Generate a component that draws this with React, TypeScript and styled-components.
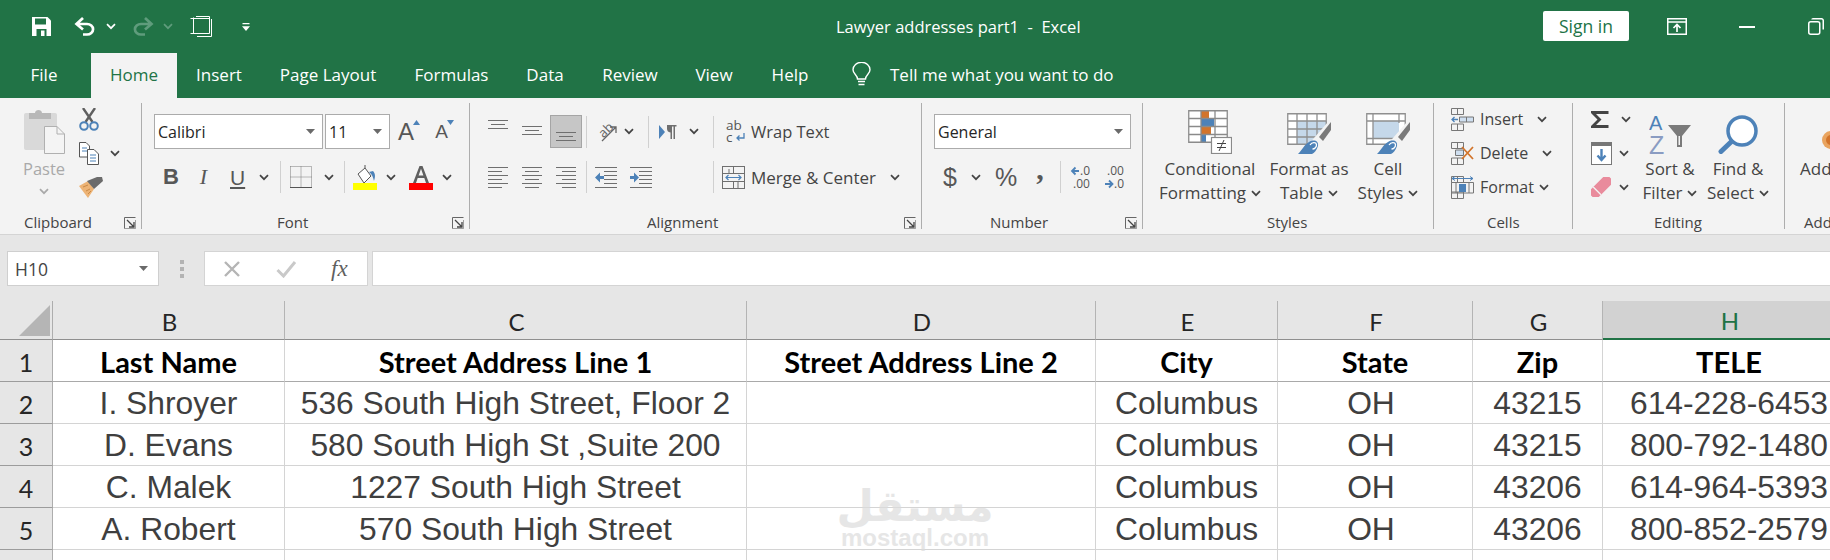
import React from 'react';
import styled, { createGlobalStyle } from 'styled-components';

const GREEN = '#217346';
const INK = '#444444';
const BLUE = '#4d82b8';

const GlobalStyle = createGlobalStyle`
	html, body {
		margin: 0;
		padding: 0;
		background: #e6e6e6;
		overflow: hidden;
	}
	svg {
		display: block;
		flex: none;
	}
`;

const Page = styled.div`
	width: 1830px;
	height: 560px;
	overflow: hidden;
	background: #e6e6e6;
	font-family: 'Open Sans', 'Noto Sans', sans-serif;
	color: ${INK};
`;

/* title bar */
const TitleBar = styled.div`
	height: 53px;
	background: ${GREEN};
	display: flex;
	align-items: center;
`;
const QuickBar = styled.div`
	flex: 0 0 836px;
	display: flex;
	align-items: center;
	padding-left: 32px;
	box-sizing: border-box;
`;
const DocTitle = styled.div`
	flex: 0 0 707px;
	color: #fff;
	font-size: 16.5px;
	white-space: pre;
`;
const SignIn = styled.div`
	width: 86px;
	height: 30px;
	margin-top: -1px;
	background: #fff;
	border-radius: 2px;
	color: ${GREEN};
	font-size: 17.5px;
	display: flex;
	align-items: center;
	justify-content: center;
`;

/* tabs */
const TabBar = styled.div`
	height: 45px;
	background: ${GREEN};
	display: flex;
	align-items: stretch;
`;
const Tab = styled.div<{ $w: number; $active?: boolean; $ml?: number }>`
	width: ${(p) => p.$w}px;
	margin-left: ${(p) => p.$ml || 0}px;
	padding-bottom: 3px;
	box-sizing: border-box;
	display: flex;
	align-items: center;
	justify-content: center;
	font-size: 17px;
	color: ${(p) => (p.$active ? GREEN : '#fff')};
	background: ${(p) => (p.$active ? '#f3f3f3' : 'transparent')};
`;
const TellMe = styled.div`
	display: flex;
	align-items: center;
	gap: 19px;
	margin-left: 22px;
	padding-bottom: 3px;
	color: #fff;
	font-size: 17px;
`;

/* ribbon */
const Ribbon = styled.div`
	height: 137px;
	box-sizing: border-box;
	background: #f3f3f3;
	border-bottom: 1px solid #d4d4d4;
	padding-top: 5px;
	display: flex;
	overflow: hidden;
`;
const Group = styled.div<{ $w: number; $last?: boolean }>`
	flex: 0 0 ${(p) => p.$w}px;
	height: 126px;
	box-sizing: border-box;
	border-right: ${(p) => (p.$last ? 'none' : '1px solid #adadad')};
	display: flex;
	flex-direction: column;
`;
const GroupBody = styled.div<{ $pl?: number; $pt?: number; $row?: boolean }>`
	height: 112px;
	flex: none;
	box-sizing: border-box;
	padding-left: ${(p) => p.$pl || 0}px;
	padding-top: ${(p) => p.$pt || 0}px;
	display: flex;
	flex-direction: ${(p) => (p.$row ? 'row' : 'column')};
`;
const GroupFoot = styled.div<{ $x: number }>`
	height: 15px;
	padding-left: ${(p) => p.$x}px;
	display: flex;
	align-items: center;
	font-size: 15px;
	line-height: 15px;
	white-space: nowrap;
	& > svg {
		margin-left: auto;
		margin-right: 5px;
	}
`;
const ToolRow = styled.div<{ $mt?: number; $h: number }>`
	display: flex;
	align-items: center;
	height: ${(p) => p.$h}px;
	margin-top: ${(p) => p.$mt || 0}px;
	white-space: nowrap;
`;
const Tool = styled.div<{ $w?: number; $ml?: number }>`
	flex: none;
	display: flex;
	align-items: center;
	justify-content: center;
	${(p) => (p.$w ? `width: ${p.$w}px;` : '')}
	margin-left: ${(p) => p.$ml || 0}px;
`;
const Divider = styled.div<{ $ml: number; $h?: number }>`
	flex: none;
	width: 1px;
	height: ${(p) => p.$h || 32}px;
	margin-left: ${(p) => p.$ml}px;
	background: #d0d0d0;
`;
const ComboBox = styled.div<{ $w: number; $ml?: number }>`
	flex: none;
	box-sizing: border-box;
	width: ${(p) => p.$w}px;
	height: 35px;
	margin-left: ${(p) => p.$ml || 0}px;
	background: #fff;
	border: 1px solid #ababab;
	display: flex;
	align-items: center;
	justify-content: space-between;
	padding: 0 7px 0 3px;
	color: #262626;
	font-size: 16px;
`;
const ToolText = styled.div<{ $size?: number; $ml?: number }>`
	font-size: ${(p) => p.$size || 16}px;
	margin-left: ${(p) => p.$ml || 0}px;
`;
const GlyphBtn = styled.div<{
	$w: number;
	$ml?: number;
	$font?: string;
	$size: number;
	$weight?: number;
	$italic?: boolean;
	$raise?: number;
}>`
	flex: none;
	width: ${(p) => p.$w}px;
	margin-left: ${(p) => p.$ml || 0}px;
	margin-bottom: ${(p) => p.$raise || 0}px;
	text-align: center;
	line-height: 1;
	font-family: ${(p) => p.$font || "'Liberation Sans', sans-serif"};
	font-size: ${(p) => p.$size}px;
	font-weight: ${(p) => p.$weight || 400};
	font-style: ${(p) => (p.$italic ? 'italic' : 'normal')};
	color: #575757;
`;
const GrowBadge = styled.div`
	flex: none;
	align-self: flex-start;
	margin: 6px 0 0 -1px;
`;
const PasteColumn = styled.div`
	flex: none;
	width: 42px;
	margin-left: 23px;
	padding-top: 6px;
	display: flex;
	flex-direction: column;
	align-items: center;
	color: #a9a9a9;
	font-size: 16.5px;
	line-height: 24px;
`;
const PasteLabel = styled.div`
	margin-top: 3px;
`;
const PasteChevron = styled.div`
	margin-top: 7px;
`;
const RowStack = styled.div<{ $ml?: number }>`
	flex: none;
	margin-left: ${(p) => p.$ml || 0}px;
	margin-top: -1px;
	display: flex;
	flex-direction: column;
`;
const StackRow = styled.div`
	height: 34px;
	display: flex;
	align-items: center;
	font-size: 16px;
	white-space: nowrap;
`;
const BigTool = styled.div<{ $w: number; $ml?: number; $start?: boolean }>`
	flex: none;
	width: ${(p) => p.$w}px;
	margin-left: ${(p) => p.$ml || 0}px;
	display: flex;
	flex-direction: column;
	align-items: ${(p) => (p.$start ? 'flex-start' : 'center')};
	font-size: 17px;
	line-height: 24px;
	white-space: nowrap;
`;
const BigIcon = styled.div`
	height: 54px;
	display: flex;
	align-items: flex-end;
	padding-bottom: 3px;
	box-sizing: border-box;
`;
const ChevronLine = styled.div`
	display: flex;
	align-items: center;
	gap: 5px;
`;

/* formula bar */
const FormulaZone = styled.div`
	height: 66px;
	box-sizing: border-box;
	padding: 16px 0 0 7px;
	display: flex;
	align-items: flex-start;
`;
const NameBox = styled.div`
	width: 152px;
	height: 35px;
	box-sizing: border-box;
	background: #fff;
	border: 1px solid #cfcfcf;
	display: flex;
	align-items: center;
	justify-content: space-between;
	padding: 0 10px 0 7px;
	font-size: 17.5px;
`;
const Grip = styled.div`
	width: 45px;
	height: 35px;
	display: flex;
	align-items: center;
	justify-content: center;
`;
const FxBox = styled.div`
	width: 164px;
	height: 35px;
	box-sizing: border-box;
	background: #fff;
	border: 1px solid #d4d4d4;
	display: flex;
	align-items: center;
	padding-left: 18px;
`;
const FxGlyph = styled.div`
	margin-left: 34px;
	font-family: 'Liberation Serif', serif;
	font-style: italic;
	font-size: 23px;
	color: #5f5f5f;
	line-height: 1;
`;
const FormulaInput = styled.div`
	flex: 1;
	height: 35px;
	box-sizing: border-box;
	margin-left: 4px;
	background: #fff;
	border: 1px solid #d4d4d4;
	border-right: none;
`;

/* sheet */
const Sheet = styled.div`
	position: relative;
	display: grid;
	grid-template-columns: 53px 232px 462px 349px 182px 195px 130px 253px;
	grid-template-rows: 39px repeat(5, 42px);
	width: 1856px;
	background: #fff;
`;
const Corner = styled.div`
	background: #e6e6e6;
	border-right: 1px solid #adadad;
	border-bottom: 1px solid #8f8f8f;
	box-sizing: border-box;
	display: flex;
	align-items: flex-end;
	justify-content: flex-end;
	padding: 0 2px 3px 0;
`;
const ColHead = styled.div<{ $selected?: boolean }>`
	box-sizing: border-box;
	display: flex;
	align-items: center;
	justify-content: center;
	padding: 2px 0 0 2px;
	background: ${(p) => (p.$selected ? '#d2d2d2' : '#e6e6e6')};
	border-right: 1px solid ${(p) => (p.$selected ? '#d2d2d2' : '#b4b4b4')};
	border-bottom: ${(p) => (p.$selected ? `2px solid ${GREEN}` : '1px solid #8f8f8f')};
	color: ${(p) => (p.$selected ? GREEN : '#262626')};
	font-family: 'Lato', sans-serif;
	font-size: 24px;
`;
const RowHead = styled.div`
	box-sizing: border-box;
	display: flex;
	align-items: center;
	justify-content: center;
	padding-top: 3px;
	background: #e6e6e6;
	border-right: 1px solid #adadad;
	border-bottom: 1px solid #9c9c9c;
	color: #262626;
	font-family: 'Lato', sans-serif;
	font-size: 25px;
`;
const Cell = styled.div<{ $head?: boolean; $shift?: number }>`
	box-sizing: border-box;
	display: flex;
	align-items: center;
	justify-content: center;
	white-space: nowrap;
	padding-top: 2px;
	padding-right: ${(p) => p.$shift || 0}px;
	border-right: 1px solid #d4d4d4;
	border-bottom: 1px solid ${(p) => (p.$head ? '#a9a9a9' : '#d4d4d4')};
	color: ${(p) => (p.$head ? '#000' : '#3f3f3f')};
	font-family: ${(p) => (p.$head ? "'Lato', sans-serif" : "'Liberation Sans', sans-serif")};
	font-weight: ${(p) => (p.$head ? 700 : 400)};
	font-size: ${(p) => (p.$head ? 29 : 31.8)}px;
`;
const FillerRow = styled.div`
	height: 20px;
	width: 1856px;
	display: grid;
	grid-template-columns: 53px 232px 462px 349px 182px 195px 130px 253px;
	background: #fff;
	& > div {
		border-right: 1px solid #d4d4d4;
	}
	& > div:first-child {
		background: #e6e6e6;
		border-right-color: #adadad;
	}
`;
const Watermark = styled.div`
	position: absolute;
	left: 842px;
	top: 184px;
	width: 146px;
	display: flex;
	flex-direction: column;
	align-items: center;
	color: #dcdcdc;
	opacity: 0.7;
	pointer-events: none;
`;
const WatermarkArabic = styled.div`
	font-family: 'DejaVu Sans', sans-serif;
	font-weight: 700;
	font-size: 43px;
	line-height: 42px;
`;
const WatermarkLatin = styled.div`
	font-family: 'Liberation Sans', sans-serif;
	font-weight: 700;
	font-size: 24px;
	line-height: 22px;
`;

/* icons */
const Chevron = ({ color = '#444' }: { color?: string }) => (
	<svg width="10" height="7" viewBox="0 0 10 7">
		<path d="M1 1.200 5 5.200 9 1.200" fill="none" stroke={color} strokeWidth="1.700" />
	</svg>
);
const Caret = () => (
	<svg width="9" height="5" viewBox="0 0 9 5">
		<path d="M0 0H9L4.500 5Z" fill="#6a6a6a" />
	</svg>
);
const Launcher = () => (
	<svg width="12" height="12" viewBox="0 0 12 12">
		<path d="M.5 11.500V.5H11.500" fill="none" stroke="#666" />
		<path d="M.5 11.500H11.500V3" fill="none" stroke="#666" strokeWidth="1" opacity=".6" />
		<path d="M3 3 9.500 9.500M5 10H10V5" fill="none" stroke="#444" strokeWidth="1.300" />
	</svg>
);
const SaveIcon = () => (
	<svg width="19" height="19" viewBox="0 0 19 19">
		<path d="M0 0H15.500L19 3.500V19H0Z" fill="#fff" />
		<path d="M3 1.500H14V7.500H3Z" fill={GREEN} />
		<path d="M4.500 12H14.500V19H4.500Z" fill={GREEN} />
		<path d="M9 13.500H12.500V19H9Z" fill="#fff" />
	</svg>
);
const UndoIcon = ({ color }: { color: string }) => (
	<svg width="22" height="19" viewBox="0 0 22 19">
		<path d="M9 1 2.500 7 9 12.500M3 7H13A6 5.200 0 0 1 13 17.500H9" fill="none" stroke={color} strokeWidth="2.700" />
	</svg>
);
const RedoIcon = ({ color }: { color: string }) => (
	<svg width="22" height="19" viewBox="0 0 22 19">
		<path d="M13 1 19.500 7 13 12.500M19 7H9A6 5.200 0 0 0 9 17.500H13" fill="none" stroke={color} strokeWidth="2.700" />
	</svg>
);
const ModeIcon = () => (
	<svg width="22" height="21" viewBox="0 0 22 21" fill="none" stroke="#fff">
		<path d="M2.500 2.500H19.500M2.500 17.500H19.500" strokeWidth="1" />
		<path d="M3.500 1.500V17.500M.5 2.500H3.500M.5 17.500H3.500" strokeWidth="1" />
		<path d="M6 .5H19.500V17.500M21.500 3V20.500H7" strokeWidth="1" />
	</svg>
);
const CustomizeIcon = () => (
	<svg width="8" height="8" viewBox="0 0 8 8">
		<path d="M.5 0H7.500V1.300H.5ZM0 3.300H8L4 8Z" fill="#fff" />
	</svg>
);
const DisplayIcon = () => (
	<svg width="20" height="17" viewBox="0 0 20 17" fill="none" stroke="#fff">
		<rect x=".75" y=".75" width="18.500" height="15.500" strokeWidth="1.500" />
		<path d="M1 4H19" strokeWidth="1.500" />
		<path d="M10 14V7M6.500 10 10 6.500 13.500 10" strokeWidth="1.700" />
	</svg>
);
const MinimizeIcon = () => (
	<svg width="16" height="2" viewBox="0 0 16 2">
		<rect width="16" height="2" fill="#fff" />
	</svg>
);
const RestoreIcon = () => (
	<svg width="16" height="17" viewBox="0 0 16 17" fill="none" stroke="#fff" strokeWidth="1.500">
		<rect x=".75" y="3.750" width="11" height="12.500" rx="2" />
		<path d="M4 1.500C4 1 4.500.75 5 .75H13A2 2 0 0 1 15.250 3V11.500" />
	</svg>
);
const BulbIcon = () => (
	<svg width="19" height="24" viewBox="0 0 19 24" fill="none" stroke="#fff" strokeWidth="1.400">
		<path d="M5.500 17C5.500 13 1 12 1 7.800A8.500 7.500 0 0 1 18 7.800C18 12 13.500 13 13.500 17Z" />
		<path d="M6 19.500H13M6.500 22.500H12.500" />
	</svg>
);
const PasteIcon = () => (
	<svg width="41" height="45" viewBox="0 0 41 45">
		<rect x="0" y="4" width="33" height="37" rx="2" fill="#d9d9d9" />
		<path d="M5 4H11C11 0 18 0 18 4H27V10H5Z" fill="#b8b8b8" />
		<path d="M20.500 17.500H33L40.500 25V44.500H20.500Z" fill="#f4f4f4" stroke="#b0b0b0" />
		<path d="M33 17.500V25H40.500" fill="none" stroke="#b0b0b0" />
	</svg>
);
const ScissorsIcon = () => (
	<svg width="20" height="23" viewBox="0 0 20 23" fill="none">
		<path d="M4 0 13.500 14M16 0 6.500 14" stroke="#5f5f5f" strokeWidth="2.400" />
		<circle cx="5" cy="18" r="3.800" stroke={BLUE} strokeWidth="2" />
		<circle cx="15" cy="18" r="3.800" stroke={BLUE} strokeWidth="2" />
	</svg>
);
const CopyIcon = () => (
	<svg width="20" height="23" viewBox="0 0 20 23" fill="#fff" stroke="#555">
		<path d="M.5.500H7L10.500 4V15H.5Z" />
		<path d="M8.500 7.500H15L19.500 12V22.500H8.500Z" />
		<path d="M3 6H8M3 9H8" stroke={BLUE} />
		<path d="M11 13H17M11 16H17M11 19H17" stroke={BLUE} />
	</svg>
);
const PainterIcon = () => (
	<svg width="24" height="22" viewBox="0 0 24 22">
		<path d="M0 10 9 5 15 13 9 22C6 18 3 14 0 10Z" fill="#edb375" />
		<path d="M8 5 18 1 23 1 24 5 15 13Z" fill="#6b6b6b" />
		<path d="M4 11 9 9M7 15 11 13M9 18 12 15" stroke="#c98a47" />
	</svg>
);
const GrowIcon = ({ up }: { up: boolean }) => (
	<svg width="7" height="5" viewBox="0 0 7 5">
		<path d={up ? 'M0 5H7L3.500 0Z' : 'M0 0H7L3.500 5Z'} fill={BLUE} />
	</svg>
);
const BorderIcon = () => (
	<svg width="22" height="22" viewBox="0 0 22 22" fill="none" stroke="#7a7a7a" strokeDasharray="1 1">
		<path d="M.5.500H21.500V21M.5.500V21M11 .5V21M.5 11H21.500" />
		<path d="M0 21.500H22" strokeDasharray="none" stroke="#555" />
	</svg>
);
const FillIcon = () => (
	<svg width="24" height="25" viewBox="0 0 24 25">
		<path d="M5 9 12 3 18 11 11 18Z" fill="#fff" stroke="#555" />
		<path d="M12 3V0" stroke="#555" />
		<path d="M20 6C23 9 22 13 21 16 20 12 19 9 16 7Z" fill={BLUE} />
		<rect x="0" y="18" width="24" height="7" fill="#ffff00" />
	</svg>
);
const FontColorIcon = () => (
	<svg width="24" height="25" viewBox="0 0 24 25">
		<path d="M4 18 10.500 1H13.500L20 18H17L15.300 13H8.700L7 18ZM9.600 10.500H14.400L12 3.800Z" fill="#5f5f5f" />
		<rect x="0" y="18" width="24" height="7" fill="#ff0000" />
	</svg>
);
const AlignV = ({ top }: { top: number }) => (
	<svg width="20" height="33" viewBox="0 0 20 33" stroke="#6f6f6f">
		<path d={`M0 ${top + 0.5}H20M3 ${top + 4.5}H17M0 ${top + 8.5}H20`} />
	</svg>
);
const SelectedAlign = styled.div`
	flex: none;
	width: 32px;
	height: 33px;
	margin-left: 8px;
	box-sizing: border-box;
	background: #c6c6c6;
	border: 1px solid #a5a5a5;
	display: flex;
	justify-content: center;
`;
const OrientationIcon = () => (
	<svg width="21" height="22" viewBox="0 0 21 22">
		<text
			x="2"
			y="13"
			fontSize="13"
			fontFamily="'Open Sans', sans-serif"
			fill="#666"
			transform="rotate(-45 8 9) translate(-1 1)"
		>
			ab
		</text>
		<path d="M5 20 19 6M13 6H19V12" fill="none" stroke="#666" strokeWidth="1.300" />
	</svg>
);
const RtlIcon = () => (
	<svg width="18" height="16" viewBox="0 0 18 16">
		<path d="M0 1 6 8 0 15Z" fill={BLUE} />
		<path d="M8 1H17.500V2.500H16V15H14.500V2.500H13V15H11.500V8.500C9 8.500 8 6.500 8 4.800Z" fill="#6f6f6f" />
	</svg>
);
const WrapIcon = () => (
	<svg width="20" height="23" viewBox="0 0 20 23">
		<text x="0" y="10" fontSize="13.500" fontFamily="'Open Sans', sans-serif" fill="#555">
			ab
		</text>
		<text x="0" y="22" fontSize="13.500" fontFamily="'Open Sans', sans-serif" fill="#555">
			c
		</text>
		<path d="M18 13V18H11M13.500 15.500 11 18 13.500 20.500" fill="none" stroke={BLUE} strokeWidth="1.300" />
	</svg>
);
const AlignH = ({ mode }: { mode: 'left' | 'center' | 'right' }) => {
	const short = mode === 'left' ? 'M0 X H14' : mode === 'center' ? 'M3 X H17' : 'M6 X H20';
	const lines = [0.5, 8.5, 16.5].map((y) => `M0 ${y}H20`).join('');
	const shorts = [4.5, 12.5, 20.5].map((y) => short.replace('X', String(y))).join('');
	return (
		<svg width="20" height="21" viewBox="0 0 20 21" stroke="#6f6f6f">
			<path d={lines + shorts} />
		</svg>
	);
};
const IndentIcon = ({ increase }: { increase: boolean }) => (
	<svg width="22" height="21" viewBox="0 0 22 21">
		<path d="M0 .5H22M9 4.500H22M9 8.500H22M9 12.500H22M9 16.500H22M0 20.500H22" stroke="#6f6f6f" />
		<path d={increase ? 'M0 9H4V5.500L9 10.500 4 15.500V12H0Z' : 'M9 9H5V5.500L0 10.500 5 15.500V12H9Z'} fill={BLUE} />
	</svg>
);
const MergeIcon = () => (
	<svg width="23" height="23" viewBox="0 0 23 23" fill="none" stroke="#6f6f6f">
		<rect x=".5" y=".5" width="22" height="22" />
		<path d="M.5 7.500H22.500M.5 15.500H22.500M11.500 .5V7.500M11.500 15.500V22.500M7 3V7M16 16V22" />
		<path d="M4 11.500H19M6.500 9 4 11.500 6.500 14M16.500 9 19 11.500 16.500 14" stroke={BLUE} strokeWidth="1.200" />
	</svg>
);
const DecimalIcon = ({ increase }: { increase: boolean }) => (
	<svg width="22" height="25" viewBox="0 0 22 25" fontFamily="'Open Sans', sans-serif" fontSize="12" fill="#555">
		{increase ? (
			<>
				<text x="3" y="10">
					.00
				</text>
				<text x="10" y="23">
					.0
				</text>
				<path d="M1 19H8M5 15.500 8.500 19 5 22.500" fill="none" stroke={BLUE} strokeWidth="1.800" />
			</>
		) : (
			<>
				<text x="10" y="10">
					.0
				</text>
				<text x="3" y="23">
					.00
				</text>
				<path d="M9 6H2M5.500 2.500 2 6 5.500 9.500" fill="none" stroke={BLUE} strokeWidth="1.800" />
			</>
		)}
	</svg>
);
const CondFormatIcon = () => (
	<svg width="44" height="44" viewBox="0 0 44 44">
		<rect x="0" y="0" width="40" height="33" fill="#fff" />
		<rect x="13" y="1" width="8" height="7" fill="#d2742b" />
		<rect x="13" y="9" width="13" height="7" fill={BLUE} />
		<rect x="13" y="17" width="10" height="7" fill="#d2742b" />
		<rect x="13" y="25" width="5" height="7" fill={BLUE} />
		<path d="M.75.75H39.250V32.250H.75ZM13 .75V32.250M27 .75V32.250M.75 8.500H39.250M.75 16.500H39.250M.75 24.500H39.250" fill="none" stroke="#8a8a8a" strokeWidth="1.300" />
		<rect x="23.500" y="27.500" width="20" height="16" fill="#fff" stroke="#8a8a8a" strokeWidth="1.200" />
		<path d="M29 33.500H38M29 37.500H38M36 30 31 41" stroke="#444" fill="none" />
	</svg>
);
const BrushTip = () => (
	<>
		<path d="M41 9V33H20Z" fill="#f3f3f3" />
		<path d="M44 9V17L36 28 32 24Z" fill="#7a7a7a" />
		<path d="M31 25 34 28" stroke="#f3f3f3" strokeWidth="1.500" />
		<path d="M11 41C15 37 18 31 22 29 27 26 32 28 31 33 30 37 27 40 25 41Z" fill={BLUE} />
		<path d="M23 32C25 29 29 29 29.500 31.500 29.800 34 27.500 36 25.500 36" fill="none" stroke="#fff" strokeWidth="1.300" />
	</>
);
const TableFormatIcon = () => (
	<svg width="44" height="41" viewBox="0 0 44 41">
		<rect x="0" y="0" width="40" height="32" fill="#fff" />
		<rect x="10" y="8" width="30" height="24" fill="#c5d8ea" />
		<path d="M.75.75H39.250V31.250H.75ZM10 .75V31.250M20 .75V31.250M30 .75V31.250M.75 8H39.250M.75 16H39.250M.75 24H39.250" fill="none" stroke="#8f8f8f" strokeWidth="1.300" />
		<BrushTip />
	</svg>
);
const CellStyleIcon = () => (
	<svg width="44" height="41" viewBox="0 0 44 41">
		<rect x="0" y="0" width="40" height="32" fill="#fff" />
		<rect x="7" y="8" width="26" height="18" fill="#c5d8ea" />
		<path d="M.75.75H39.250V31.250H.75ZM7 .75V31.250M33 .75V10M.75 8H39.250M.75 25.500H39.250" fill="none" stroke="#8f8f8f" strokeWidth="1.300" />
		<BrushTip />
	</svg>
);
const CellsIcon = ({ kind }: { kind: 'insert' | 'delete' | 'format' }) => (
	<svg width="23" height="23" viewBox="0 0 23 23" fill="none" stroke="#777">
		<path d="M.5.500H12.500V6.500H.5ZM6.500.500V6.500" />
		<path d="M.5 16H12.500V22.500H.5ZM6.500 16V22.500" />
		{kind === 'insert' && (
			<>
				<path d="M8.500 9H22.500V14H8.500ZM15.500 9V14" fill="#cfdff0" stroke="#777" />
				<path d="M1 11.500H7M3.500 9 1 11.500 3.500 14" stroke={BLUE} strokeWidth="1.300" />
			</>
		)}
		{kind === 'delete' && (
			<>
				<path d="M4.500 8H12.500V13.500H4.500Z" fill="#cfdff0" />
				<path d="M11 5 22 17M22 5 11 17" stroke="#d2742b" strokeWidth="1.800" />
			</>
		)}
		{kind === 'format' && (
			<>
				<path d="M.5 6.500H22.500V17H.5ZM5 6.500V17M18 6.500V17" />
				<rect x="8" y="8" width="7" height="8" fill={BLUE} stroke="none" />
				<path d="M1 2.500H22M4 .5 1 2.500 4 4.500M19 .5 22 2.500 19 4.500" stroke={BLUE} />
			</>
		)}
	</svg>
);
const SigmaIcon = () => (
	<svg width="18" height="17" viewBox="0 0 18 17">
		<path d="M0 0H17.500V3H5L10.500 8.500 5 14H17.500V17H0V15L6.500 8.500 0 2Z" fill="#444" />
	</svg>
);
const FillDownIcon = () => (
	<svg width="21" height="23" viewBox="0 0 21 23">
		<rect x=".5" y=".5" width="20" height="22" fill="#fff" stroke="#777" />
		<rect x="0" y="0" width="21" height="4" fill="#777" />
		<path d="M10.500 7V18M6.500 13.500 10.500 18 14.500 13.500" fill="none" stroke={BLUE} strokeWidth="2.400" />
	</svg>
);
const EraserIcon = () => (
	<svg width="20" height="20" viewBox="0 0 20 20">
		<g transform="rotate(45 10 10)">
			<rect x="4.500" y="-3" width="11" height="26" rx="2" fill="#e98b9c" />
			<path d="M4.500 15.500H15.500" stroke="#f3f3f3" strokeWidth="1.300" />
		</g>
	</svg>
);
const SortIcon = () => (
	<svg width="42" height="38" viewBox="0 0 42 38">
		<text x="0" y="14" fontSize="20" fontFamily="'Liberation Sans', sans-serif" fill={BLUE}>
			A
		</text>
		<text x="0" y="38" fontSize="25" fontFamily="'Liberation Sans', sans-serif" fill="#8a9cc2">
			Z
		</text>
		<path d="M19 9H42L33 20V31H28V20Z" fill="#7a7a7a" />
		<path d="M29.500 20H31V29H29.500Z" fill="#f3f3f3" />
	</svg>
);
const FindIcon = () => (
	<svg width="40" height="39" viewBox="0 0 40 39" fill="none">
		<circle cx="24" cy="16" r="14" fill="#fff" stroke={BLUE} strokeWidth="3.500" />
		<path d="M13 27 3 36.500" stroke={BLUE} strokeWidth="5" strokeLinecap="round" />
	</svg>
);
const AddInIcon = () => (
	<svg width="22" height="28" viewBox="0 0 22 28">
		<circle cx="13" cy="14" r="9" fill="#e9a45f" />
		<circle cx="13" cy="14" r="5" fill="#d2742b" />
	</svg>
);
const CrossIcon = () => (
	<svg width="18" height="18" viewBox="0 0 18 18">
		<path d="M2 2 16 16M16 2 2 16" stroke="#b5b5b5" strokeWidth="2.400" />
	</svg>
);
const CheckIcon = () => (
	<svg width="21" height="18" viewBox="0 0 21 18">
		<path d="M1.500 10 7.500 16 19 2" fill="none" stroke="#c9c9c9" strokeWidth="3" />
	</svg>
);
const GripIcon = () => (
	<svg width="4" height="18" viewBox="0 0 4 18">
		<path d="M0 0H4V4H0ZM0 7H4V11H0ZM0 14H4V18H0Z" fill="#b3b3b3" />
	</svg>
);
const CornerIcon = () => (
	<svg width="31" height="31" viewBox="0 0 31 31">
		<path d="M31 0V31H0Z" fill="#b5b5b5" />
	</svg>
);

const tabs = [
	{ name: 'File', w: 88 },
	{ name: 'Home', w: 86, ml: 3, active: true },
	{ name: 'Insert', w: 84 },
	{ name: 'Page Layout', w: 134 },
	{ name: 'Formulas', w: 113 },
	{ name: 'Data', w: 74 },
	{ name: 'Review', w: 96 },
	{ name: 'View', w: 72 },
	{ name: 'Help', w: 80 }
];

const columns = ['B', 'C', 'D', 'E', 'F', 'G', 'H'];
const rows = [
	['Last Name', 'Street Address Line 1', 'Street Address Line 2', 'City', 'State', 'Zip', 'TELE'],
	['I. Shroyer', '536 South High Street, Floor 2', '', 'Columbus', 'OH', '43215', '614-228-6453'],
	['D. Evans', '580 South High St ,Suite 200', '', 'Columbus', 'OH', '43215', '800-792-1480'],
	['C. Malek', '1227 South High Street', '', 'Columbus', 'OH', '43206', '614-964-5393'],
	['A. Robert', '570 South High Street', '', 'Columbus', 'OH', '43206', '800-852-2579']
];

const App: React.FC = () => {
	return (
		<Page>
			<GlobalStyle />
			<TitleBar>
				<QuickBar>
					<SaveIcon />
					<Tool $ml={23}>
						<UndoIcon color="#fff" />
					</Tool>
					<Tool $ml={10}>
						<Chevron color="#fff" />
					</Tool>
					<Tool $ml={16}>
						<RedoIcon color="#5f9c7c" />
					</Tool>
					<Tool $ml={9}>
						<Chevron color="#5f9c7c" />
					</Tool>
					<Tool $ml={17}>
						<ModeIcon />
					</Tool>
					<Tool $ml={30}>
						<CustomizeIcon />
					</Tool>
				</QuickBar>
				<DocTitle>Lawyer addresses part1  -  Excel</DocTitle>
				<SignIn>Sign in</SignIn>
				<Tool $ml={38}>
					<DisplayIcon />
				</Tool>
				<Tool $ml={52}>
					<MinimizeIcon />
				</Tool>
				<Tool $ml={53}>
					<RestoreIcon />
				</Tool>
			</TitleBar>
			<TabBar>
				{tabs.map((t) => (
					<Tab key={t.name} $w={t.w} $ml={t.ml} $active={t.active}>
						{t.name}
					</Tab>
				))}
				<TellMe>
					<BulbIcon />
					Tell me what you want to do
				</TellMe>
			</TabBar>
			<Ribbon>
				<Group $w={142}>
					<GroupBody $row>
						<PasteColumn>
							<PasteIcon />
							<PasteLabel>Paste</PasteLabel>
							<PasteChevron>
								<Chevron color="#a9a9a9" />
							</PasteChevron>
						</PasteColumn>
						<RowStack $ml={14}>
							<StackRow>
								<ScissorsIcon />
							</StackRow>
							<StackRow>
								<CopyIcon />
								<Tool $ml={11}>
									<Chevron />
								</Tool>
							</StackRow>
							<StackRow>
								<PainterIcon />
							</StackRow>
						</RowStack>
					</GroupBody>
					<GroupFoot $x={24}>
						Clipboard
						<Launcher />
					</GroupFoot>
				</Group>
				<Group $w={328}>
					<GroupBody $pl={12} $pt={11}>
						<ToolRow $h={35}>
							<ComboBox $w={169}>
								Calibri
								<Caret />
							</ComboBox>
							<ComboBox $w={65} $ml={2}>
								11
								<Caret />
							</ComboBox>
							<GlyphBtn $w={16} $ml={8} $size={24}>
								A
							</GlyphBtn>
							<GrowBadge>
								<GrowIcon up />
							</GrowBadge>
							<GlyphBtn $w={13} $ml={15} $size={19}>
								A
							</GlyphBtn>
							<GrowBadge>
								<GrowIcon up={false} />
							</GrowBadge>
						</ToolRow>
						<ToolRow $h={36} $mt={10}>
							<GlyphBtn $w={13} $ml={9} $size={22} $weight={700}>
								B
							</GlyphBtn>
							<GlyphBtn $w={11} $ml={22} $size={22} $font="'Liberation Serif', serif" $italic>
								I
							</GlyphBtn>
							<GlyphBtn $w={14} $ml={21} $size={21}>
								<u>U</u>
							</GlyphBtn>
							<Tool $w={10} $ml={15}>
								<Chevron />
							</Tool>
							<Divider $ml={11} />
							<Tool $ml={9}>
								<BorderIcon />
							</Tool>
							<Tool $w={10} $ml={12}>
								<Chevron />
							</Tool>
							<Divider $ml={10} />
							<Tool $ml={8}>
								<FillIcon />
							</Tool>
							<Tool $w={10} $ml={9}>
								<Chevron />
							</Tool>
							<Tool $ml={13}>
								<FontColorIcon />
							</Tool>
							<Tool $w={10} $ml={9}>
								<Chevron />
							</Tool>
						</ToolRow>
					</GroupBody>
					<GroupFoot $x={135}>
						Font
						<Launcher />
					</GroupFoot>
				</Group>
				<Group $w={452}>
					<GroupBody $pl={18} $pt={12}>
						<ToolRow $h={33}>
							<AlignV top={5} />
							<Tool $ml={14}>
								<AlignV top={11} />
							</Tool>
							<SelectedAlign>
								<AlignV top={16} />
							</SelectedAlign>
							<Divider $ml={4} />
							<Tool $ml={10}>
								<OrientationIcon />
							</Tool>
							<Tool $w={10} $ml={6}>
								<Chevron />
							</Tool>
							<Divider $ml={14} />
							<Tool $ml={10}>
								<RtlIcon />
							</Tool>
							<Tool $w={10} $ml={12}>
								<Chevron />
							</Tool>
							<Divider $ml={14} />
							<Tool $ml={12}>
								<WrapIcon />
							</Tool>
							<ToolText $ml={5} $size={16.5}>
								Wrap Text
							</ToolText>
						</ToolRow>
						<ToolRow $h={36} $mt={11}>
							<AlignH mode="left" />
							<Tool $ml={14}>
								<AlignH mode="center" />
							</Tool>
							<Tool $ml={14}>
								<AlignH mode="right" />
							</Tool>
							<Divider $ml={10} />
							<Tool $ml={8}>
								<IndentIcon increase={false} />
							</Tool>
							<Tool $ml={13}>
								<IndentIcon increase />
							</Tool>
							<Divider $ml={61} />
							<Tool $ml={8}>
								<MergeIcon />
							</Tool>
							<ToolText $ml={6} $size={17}>
								Merge &amp; Center
							</ToolText>
							<Tool $w={10} $ml={14}>
								<Chevron />
							</Tool>
						</ToolRow>
					</GroupBody>
					<GroupFoot $x={177}>
						Alignment
						<Launcher />
					</GroupFoot>
				</Group>
				<Group $w={221}>
					<GroupBody $pl={12} $pt={11}>
						<ToolRow $h={35}>
							<ComboBox $w={197}>
								General
								<Caret />
							</ComboBox>
						</ToolRow>
						<ToolRow $h={36} $mt={10}>
							<GlyphBtn $w={14} $ml={9} $size={25}>
								$
							</GlyphBtn>
							<Tool $w={10} $ml={14}>
								<Chevron />
							</Tool>
							<GlyphBtn $w={22} $ml={14} $size={25}>
								%
							</GlyphBtn>
							<GlyphBtn $w={10} $ml={18} $size={30} $font="'Liberation Serif', serif" $weight={700} $raise={16}>
								,
							</GlyphBtn>
							<Divider $ml={15} />
							<Tool $ml={9}>
								<DecimalIcon increase={false} />
							</Tool>
							<Tool $ml={12}>
								<DecimalIcon increase />
							</Tool>
						</ToolRow>
					</GroupBody>
					<GroupFoot $x={68}>
						Number
						<Launcher />
					</GroupFoot>
				</Group>
				<Group $w={291}>
					<GroupBody $row>
						<BigTool $w={110} $ml={12}>
							<BigIcon>
								<CondFormatIcon />
							</BigIcon>
							<div>Conditional</div>
							<ChevronLine>
								Formatting
								<Chevron />
							</ChevronLine>
						</BigTool>
						<BigTool $w={80} $ml={4}>
							<BigIcon>
								<TableFormatIcon />
							</BigIcon>
							<div>Format as</div>
							<ChevronLine>
								Table
								<Chevron />
							</ChevronLine>
						</BigTool>
						<BigTool $w={62} $ml={8}>
							<BigIcon>
								<CellStyleIcon />
							</BigIcon>
							<div>Cell</div>
							<ChevronLine>
								Styles
								<Chevron />
							</ChevronLine>
						</BigTool>
					</GroupBody>
					<GroupFoot $x={124}>Styles</GroupFoot>
				</Group>
				<Group $w={139}>
					<GroupBody $row>
						<RowStack $ml={17}>
							<StackRow>
								<CellsIcon kind="insert" />
								<ToolText $ml={6}>Insert</ToolText>
								<Tool $ml={14}>
									<Chevron />
								</Tool>
							</StackRow>
							<StackRow>
								<CellsIcon kind="delete" />
								<ToolText $ml={6}>Delete</ToolText>
								<Tool $ml={14}>
									<Chevron />
								</Tool>
							</StackRow>
							<StackRow>
								<CellsIcon kind="format" />
								<ToolText $ml={6}>Format</ToolText>
								<Tool $ml={5}>
									<Chevron />
								</Tool>
							</StackRow>
						</RowStack>
					</GroupBody>
					<GroupFoot $x={53}>Cells</GroupFoot>
				</Group>
				<Group $w={212}>
					<GroupBody $row>
						<RowStack $ml={18}>
							<StackRow>
								<SigmaIcon />
								<Tool $ml={12}>
									<Chevron />
								</Tool>
							</StackRow>
							<StackRow>
								<FillDownIcon />
								<Tool $ml={7}>
									<Chevron />
								</Tool>
							</StackRow>
							<StackRow>
								<EraserIcon />
								<Tool $ml={8}>
									<Chevron />
								</Tool>
							</StackRow>
						</RowStack>
						<BigTool $w={58} $ml={10}>
							<BigIcon>
								<SortIcon />
							</BigIcon>
							<div>Sort &amp;</div>
							<ChevronLine>
								Filter
								<Chevron />
							</ChevronLine>
						</BigTool>
						<BigTool $w={64} $ml={7}>
							<BigIcon>
								<FindIcon />
							</BigIcon>
							<div>Find &amp;</div>
							<ChevronLine>
								Select
								<Chevron />
							</ChevronLine>
						</BigTool>
					</GroupBody>
					<GroupFoot $x={81}>Editing</GroupFoot>
				</Group>
				<Group $w={60} $last>
					<GroupBody $row>
						<BigTool $w={60} $ml={15} $start>
							<BigIcon>
								<Tool $ml={18}>
									<AddInIcon />
								</Tool>
							</BigIcon>
							<div>Add-ins</div>
						</BigTool>
					</GroupBody>
					<GroupFoot $x={19}>Add-ins</GroupFoot>
				</Group>
			</Ribbon>
			<FormulaZone>
				<NameBox>
					H10
					<Caret />
				</NameBox>
				<Grip>
					<GripIcon />
				</Grip>
				<FxBox>
					<CrossIcon />
					<Tool $ml={35}>
						<CheckIcon />
					</Tool>
					<FxGlyph>fx</FxGlyph>
				</FxBox>
				<FormulaInput />
			</FormulaZone>
			<Sheet>
				<Corner>
					<CornerIcon />
				</Corner>
				{columns.map((c) => (
					<ColHead key={c} $selected={c === 'H'}>
						{c}
					</ColHead>
				))}
				{rows.map((row, r) => (
					<React.Fragment key={r}>
						<RowHead>{r + 1}</RowHead>
						{row.map((value, c) => (
							<Cell key={c} $head={r === 0} $shift={r > 0 && c === 4 ? 8 : 0}>
								{value}
							</Cell>
						))}
					</React.Fragment>
				))}
				<Watermark>
					<WatermarkArabic>مستقل</WatermarkArabic>
					<WatermarkLatin>mostaql.com</WatermarkLatin>
				</Watermark>
			</Sheet>
			<FillerRow>
				<div />
				{columns.map((c) => (
					<div key={c} />
				))}
			</FillerRow>
		</Page>
	);
};

export default App;
